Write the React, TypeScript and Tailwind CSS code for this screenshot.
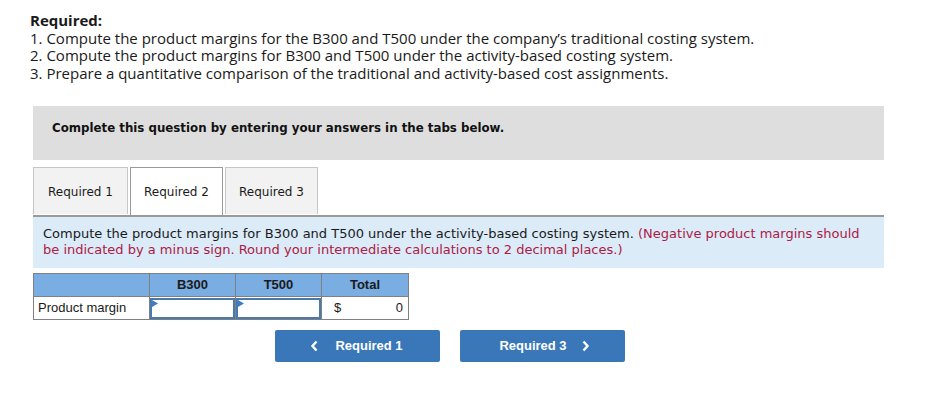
import React from "react";

function Triangle() {
  return (
    <svg className="absolute left-0 top-0" width="6" height="7" viewBox="0 0 6 7">
      <polygon points="0,0 6,3.5 0,7" fill="#3d7cc9" />
    </svg>
  );
}

export default function App() {
  return (
    <div className="w-[949px] h-[419px] bg-white relative">
      <div className="pl-[30px] pt-[12px] font-['Open_Sans',Arial,sans-serif] text-[15px] leading-[17.5px] text-[#1a1a1a]">
        <div className="font-bold">Required:</div>
        <div>1. Compute the product margins for the B300 and T500 under the company’s traditional costing system.</div>
        <div>2. Compute the product margins for B300 and T500 under the activity-based costing system.</div>
        <div>3. Prepare a quantitative comparison of the traditional and activity-based cost assignments.</div>
      </div>

      <div className="ml-[33px] mt-[24px] w-[851px] h-[54px] bg-[#dedede] flex items-center pl-[19px] pb-[8px] font-['DejaVu_Sans',Verdana,sans-serif] text-[11.8px] font-bold text-[#111]">
        Complete this question by entering your answers in the tabs below.
      </div>

      <div className="ml-[33px] mt-[7px] w-[851px] flex font-['DejaVu_Sans',Verdana,sans-serif] text-[12px] text-[#1a1a1a] relative z-10">
        <div className="w-[95px] h-[47px] mr-[2px] bg-[#f2f2f2] border border-[#c6c6c6] border-b-0 flex items-center justify-center pt-[1px]">
          Required 1
        </div>
        <div className="w-[93px] h-[48px] mr-[2px] bg-white border border-[#9a9a9a] border-b-0 flex items-center justify-center">
          Required 2
        </div>
        <div className="w-[93px] h-[47px] bg-[#f2f2f2] border border-[#c6c6c6] border-b-0 flex items-center justify-center pt-[1px]">
          Required 3
        </div>
      </div>

      <div className="ml-[33px] w-[851px] h-[53px] bg-[#dbebf8] border-t-2 border-[#9a9a9a] pl-[10px] pr-[14px] pt-[9px] font-['DejaVu_Sans',Verdana,sans-serif] text-[13px] leading-[16px] text-[#1a1a1a]">
        Compute the product margins for B300 and T500 under the activity-based costing system.{" "}
        <span className="text-[#ad1a45]">
          (Negative product margins should be indicated by a minus sign. Round your intermediate calculations to 2 decimal places.)
        </span>
      </div>

      <table className="ml-[33px] mt-[5px] border-collapse font-['Liberation_Sans',Arial,sans-serif] text-[13px] text-[#1a1a1a]">
        <thead>
          <tr className="h-[23px] bg-[#7aade2]">
            <th className="w-[116px] border border-[#808080] p-0"></th>
            <th className="w-[86px] border border-[#808080] p-0 font-bold">B300</th>
            <th className="w-[86px] border border-[#808080] p-0 font-bold">T500</th>
            <th className="w-[87px] border border-[#808080] p-0 font-bold">Total</th>
          </tr>
        </thead>
        <tbody>
          <tr className="h-[23px]">
            <td className="border border-[#808080] pl-[4px] text-left">Product margin</td>
            <td className="border border-[#808080] p-0 relative">
              <div className="h-[21px] border-2 border-[#4a79ad] relative">
                <Triangle />
              </div>
            </td>
            <td className="border border-[#808080] p-0 relative">
              <div className="h-[21px] border-2 border-[#4a79ad] relative">
                <Triangle />
              </div>
            </td>
            <td className="border border-[#808080] px-[5px]">
              <div className="flex justify-between pl-[7px]">
                <span>$</span>
                <span>0</span>
              </div>
            </td>
          </tr>
        </tbody>
      </table>

      <div className="flex ml-[275px] mt-[10px] gap-[20px] font-['Liberation_Sans',Arial,sans-serif] text-[13px] font-bold text-white">
        <div className="w-[165px] h-[32px] bg-[#3a77b9] rounded-[2px] flex items-center justify-center gap-[16px] pr-[2px]">
          <svg width="9" height="12" viewBox="0 0 9 12">
            <polyline points="6.5,1.5 2.5,6 6.5,10.5" fill="none" stroke="white" strokeWidth="2.4" />
          </svg>
          <span>Required 1</span>
        </div>
        <div className="w-[165px] h-[32px] bg-[#3a77b9] rounded-[2px] flex items-center justify-center gap-[14px] pl-[4px]">
          <span>Required 3</span>
          <svg width="9" height="12" viewBox="0 0 9 12">
            <polyline points="2.5,1.5 6.5,6 2.5,10.5" fill="none" stroke="white" strokeWidth="2.4" />
          </svg>
        </div>
      </div>
    </div>
  );
}
